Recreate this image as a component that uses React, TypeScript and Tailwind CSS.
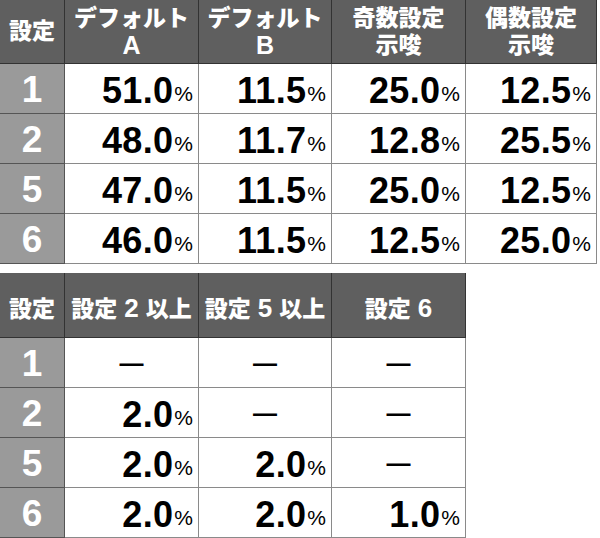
const font = { fontFamily: '"Liberation Sans", "Noto Sans CJK JP", sans-serif' };

type Row = { label: string; values: string[] };

const top: Row[] = [
  { label: "1", values: ["51.0", "11.5", "25.0", "12.5"] },
  { label: "2", values: ["48.0", "11.7", "12.8", "25.5"] },
  { label: "5", values: ["47.0", "11.5", "25.0", "12.5"] },
  { label: "6", values: ["46.0", "11.5", "12.5", "25.0"] },
];

const bottom: Row[] = [
  { label: "1", values: ["", "", ""] },
  { label: "2", values: ["2.0", "", ""] },
  { label: "5", values: ["2.0", "2.0", ""] },
  { label: "6", values: ["2.0", "2.0", "1.0"] },
];

function HeadCell({ children }: { children: React.ReactNode }) {
  return (
    <div className="flex flex-col items-center justify-center border-r border-b border-[#333] bg-[#5f5f5f] text-[23px] font-black leading-[27px] text-white">
      {children}
    </div>
  );
}

function LabelCell({ label }: { label: string }) {
  return (
    <div className="flex items-center justify-center border-r border-b border-[#555] bg-[#9a9a9a] pt-[3px] text-[37px] font-bold text-white">
      {label}
    </div>
  );
}

function ValueCell({ value }: { value: string }) {
  if (!value) {
    return (
      <div className="flex items-center justify-center border-r border-b border-[#8a8a8a] bg-white text-[24px] font-bold text-black">
        —
      </div>
    );
  }
  return (
    <div className="flex items-center justify-end border-r border-b border-[#8a8a8a] bg-white pt-[4px] pr-[5px] text-black">
      <span className="text-[36px] font-bold leading-none tracking-[0.3px]">{value}</span>
      <span className="ml-[1px] self-end pb-[9px] text-[21px] leading-none">%</span>
    </div>
  );
}

export default function App() {
  return (
    <div className="h-[538px] w-[600px] bg-white" style={font}>
      <div className="grid w-[597px] grid-cols-[65px_134px_133px_134px_131px] grid-rows-[64px_50px_50px_50px_50px]">
        <HeadCell>設定</HeadCell>
        <HeadCell>
          <span>デフォルト</span>
          <span className="text-[25px]">A</span>
        </HeadCell>
        <HeadCell>
          <span>デフォルト</span>
          <span className="text-[25px]">B</span>
        </HeadCell>
        <HeadCell>
          <span>奇数設定</span>
          <span>示唆</span>
        </HeadCell>
        <HeadCell>
          <span>偶数設定</span>
          <span>示唆</span>
        </HeadCell>
        {top.map((r) => (
          <>
            <LabelCell key={r.label} label={r.label} />
            {r.values.map((v, i) => (
              <ValueCell key={r.label + i} value={v} />
            ))}
          </>
        ))}
      </div>

      <div className="mt-[9px] grid w-[466px] grid-cols-[65px_134px_133px_134px] grid-rows-[65px_50px_50px_50px_50px]">
        <HeadCell>
          <span className="pt-[8px]">設定</span>
        </HeadCell>
        <HeadCell>
          <span className="whitespace-nowrap pt-[8px]">
            設定<span className="mx-[7px] text-[26px]">2</span>以上
          </span>
        </HeadCell>
        <HeadCell>
          <span className="whitespace-nowrap pt-[8px]">
            設定<span className="mx-[7px] text-[26px]">5</span>以上
          </span>
        </HeadCell>
        <HeadCell>
          <span className="whitespace-nowrap pt-[8px]">
            設定<span className="ml-[7px] text-[26px]">6</span>
          </span>
        </HeadCell>
        {bottom.map((r) => (
          <>
            <LabelCell key={r.label} label={r.label} />
            {r.values.map((v, i) => (
              <ValueCell key={r.label + i} value={v} />
            ))}
          </>
        ))}
      </div>
    </div>
  );
}
